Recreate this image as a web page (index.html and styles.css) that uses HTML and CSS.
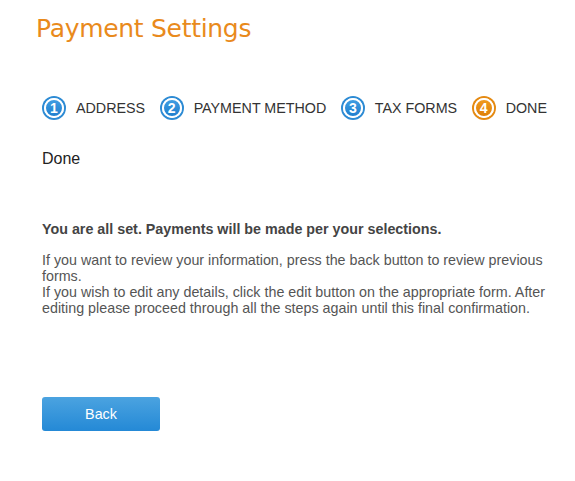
FILE: index.html
```html
<!DOCTYPE html>
<html lang="en">
<head>
  <meta charset="UTF-8">
  <title>Payment Settings</title>
  <link rel="stylesheet" href="styles.css">
</head>
<body>
  <div class="page">
    <h1 class="title">Payment Settings</h1>

    <ol class="steps">
      <li class="step"><span class="badge">1</span>ADDRESS</li>
      <li class="step"><span class="badge">2</span>PAYMENT METHOD</li>
      <li class="step"><span class="badge">3</span>TAX FORMS</li>
      <li class="step current"><span class="badge">4</span>DONE</li>
    </ol>

    <h2 class="section">Done</h2>

    <p class="lead">You are all set. Payments will be made per your selections.</p>
    <p class="info">If you want to review your information, press the back button to review previous forms.<br>
    If you wish to edit any details, click the edit button on the appropriate form. After editing please proceed through all the steps again until this final confirmation.</p>

    <button class="btn">Back</button>
  </div>
</body>
</html>
```

FILE: styles.css
```css
body {
  margin: 0;
  background-color: #fff;
  font-family: 'Liberation Sans', Arial, sans-serif;
  color: #444;
}
.page {
  padding: 12px 20px 0 42px;
}
.title {
  margin: 0 0 0 -6px;
  font-family: 'DejaVu Sans', Tahoma, sans-serif;
  font-weight: normal;
  font-size: 25px;
  letter-spacing: -0.3px;
  line-height: 34px;
  color: #e98a1c;
}
.steps {
  list-style: none;
  margin: 50px 0 0 0;
  padding: 0;
  display: flex;
  align-items: center;
}
.step {
  display: flex;
  align-items: center;
  flex-shrink: 0;
  white-space: nowrap;
  font-size: 14.3px;
  color: #333;
  margin-right: 14.5px;
}
.badge {
  width: 20px;
  height: 20px;
  box-sizing: border-box;
  border-radius: 50%;
  border: 2px solid #fff;
  box-shadow: 0 0 0 2px #2d8bd4;
  margin: 2px 12px 2px 2px;
  background: linear-gradient(#3f9de2, #1f7fcf);
  color: #fff;
  font-weight: bold;
  font-size: 14px;
  display: flex;
  align-items: center;
  justify-content: center;
  line-height: 1;
}
.current .badge {
  box-shadow: 0 0 0 2px #e58a12;
  background: linear-gradient(#f09a1e, #de8008);
}
.section {
  margin: 30px 0 0 0;
  font-size: 16px;
  font-weight: normal;
  color: #222;
}
.lead {
  margin: 53px 0 0 0;
  font-size: 14.3px;
  font-weight: bold;
  color: #444;
}
.info {
  margin: 15px 0 0 0;
  font-size: 14.3px;
  line-height: 16px;
  color: #555;
  max-width: 510px;
}
.btn {
  display: block;
  margin-top: 81px;
  width: 118px;
  height: 34px;
  border: none;
  border-radius: 3px;
  background: linear-gradient(#4ba3e0, #2489d6);
  color: #fff;
  font-family: 'Liberation Sans', Arial, sans-serif;
  font-size: 14.3px;
  cursor: pointer;
}
```
